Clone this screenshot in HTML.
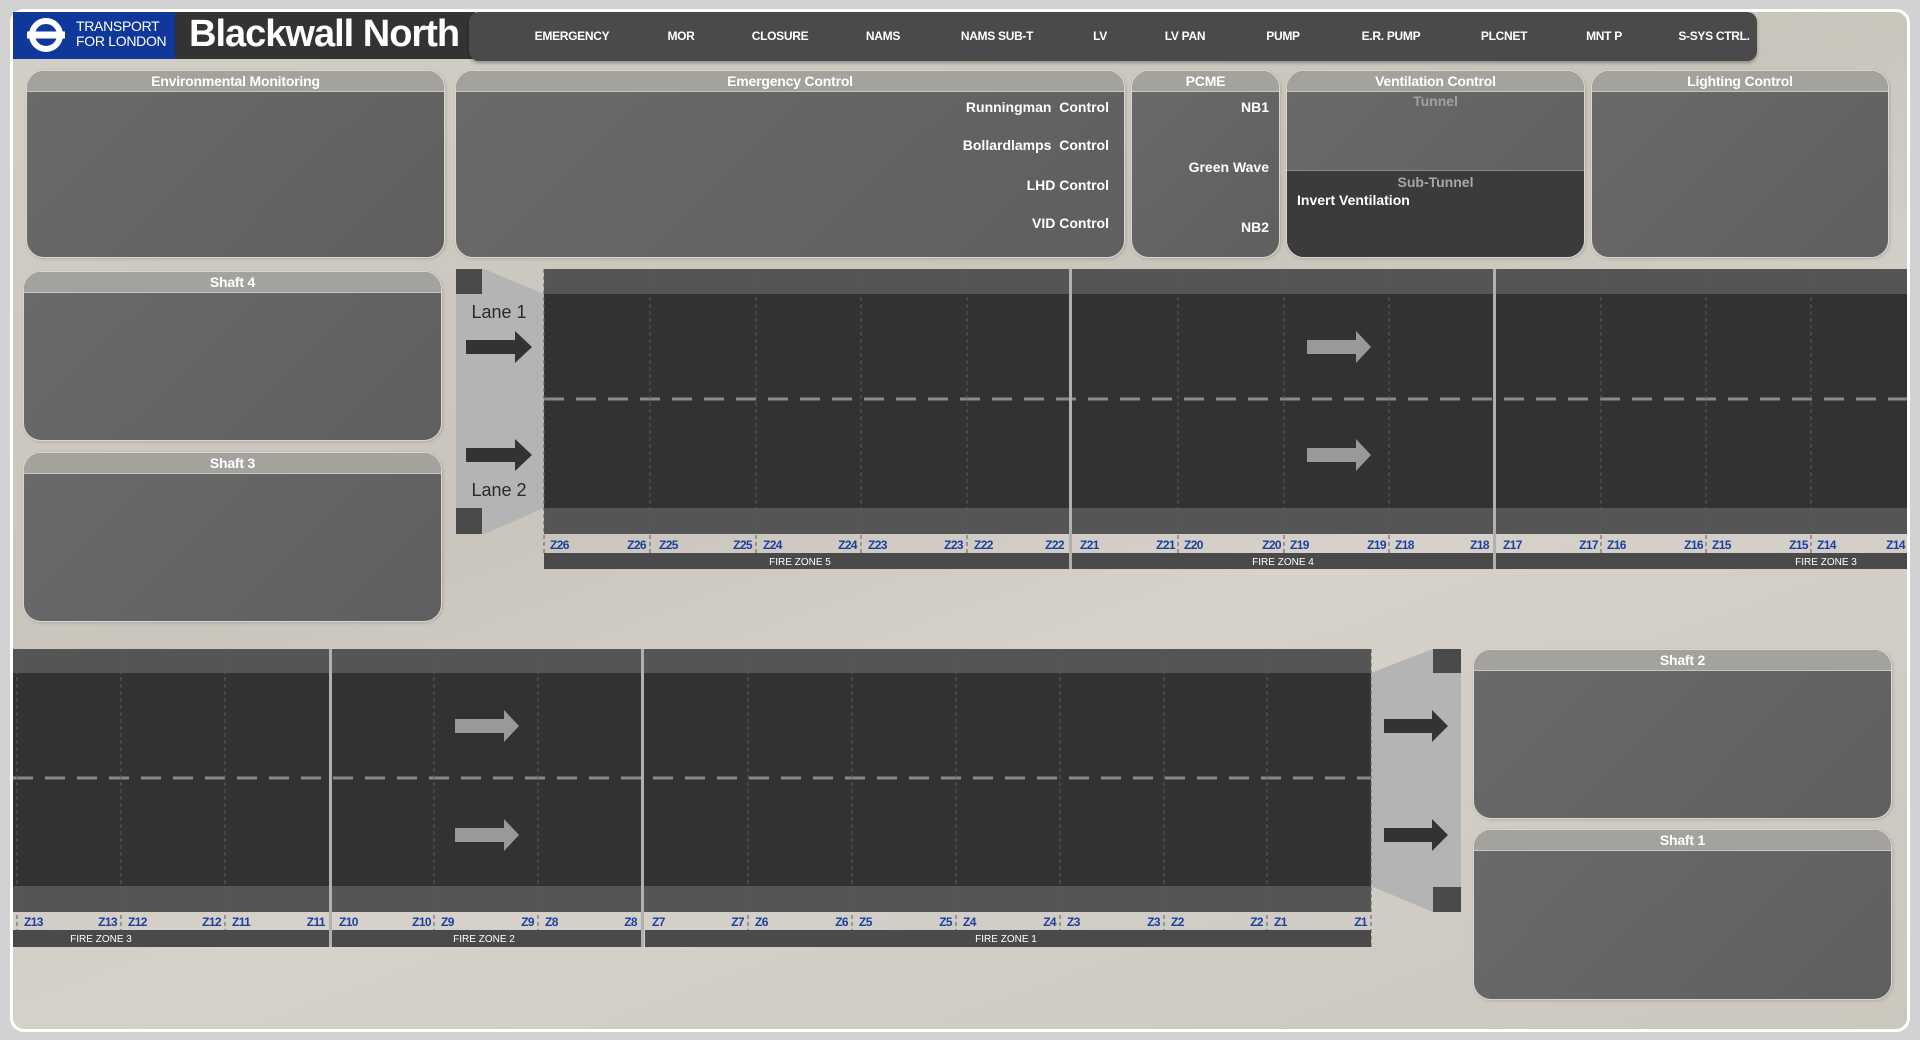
<!DOCTYPE html>
<html><head><meta charset="utf-8"><style>
*{margin:0;padding:0;box-sizing:border-box}
body{width:1920px;height:1040px;overflow:hidden;background:#d2d2d2;font-family:"Liberation Sans",sans-serif;position:relative}
.frame{position:absolute;left:10px;top:9px;width:1900px;height:1023px;border:3px solid #fff;border-radius:14px;background:linear-gradient(160deg,#d3cfc7 0%,#c9c5bc 40%,#d6d2ca 60%,#cbc7be 100%);overflow:hidden}
.abs{position:absolute}
.panel{position:absolute;border:1px solid #d8d6d0;border-radius:18px;background:linear-gradient(135deg,#6a6a6a,#5f5f5f);overflow:hidden;box-shadow:1px 1px 3px rgba(0,0,0,.15)}
.panel .hd{height:21px;background:#a4a29d;border-bottom:1px solid #c8c6c0;color:#fff;font-weight:bold;font-size:14px;text-align:center;line-height:21px;letter-spacing:-.2px}
.t{position:absolute;color:#fff;font-weight:bold;font-size:14px;white-space:nowrap}
.nav{position:absolute;left:469px;top:12px;width:1288px;height:49px;background:#4a4a4a;border-radius:10px;box-shadow:0 2px 3px rgba(0,0,0,.3)}
.nav span{position:absolute;top:17px;color:#fff;font-weight:bold;font-size:12px;letter-spacing:-.3px;transform:translateX(-50%);white-space:nowrap}
</style></head><body>
<div class="frame"></div>
<div class="abs" style="left:13px;top:12px;width:162px;height:47px;background:#10389a"></div>
<svg class="abs" style="left:26px;top:17px" width="40" height="36" viewBox="0 0 40 36"><circle cx="20" cy="18" r="14" fill="none" stroke="#fff" stroke-width="6"/><rect x="1" y="14.5" width="38" height="7" fill="#fff"/></svg>
<div class="abs" style="left:76px;top:19px;color:#fff;font-size:14px;line-height:15px;letter-spacing:-.3px">TRANSPORT<br>FOR LONDON</div>
<div class="abs" style="left:175px;top:12px;width:300px;height:47px;background:#333"></div>
<div class="abs" style="left:189px;top:13px;color:#fff;font-weight:bold;font-size:38px;letter-spacing:-1px">Blackwall North</div>
<div class="nav">
<span style="left:103px">EMERGENCY</span><span style="left:212px">MOR</span><span style="left:311px">CLOSURE</span><span style="left:414px">NAMS</span><span style="left:528px">NAMS SUB-T</span><span style="left:631px">LV</span><span style="left:716px">LV PAN</span><span style="left:814px">PUMP</span><span style="left:922px">E.R. PUMP</span><span style="left:1035px">PLCNET</span><span style="left:1135px">MNT P</span><span style="left:1245px">S-SYS CTRL.</span>
</div>

<div class="panel" style="left:26px;top:70px;width:419px;height:188px"><div class="hd">Environmental Monitoring</div></div>
<div class="panel" style="left:455px;top:70px;width:670px;height:188px"><div class="hd">Emergency Control</div>
<div class="t" style="right:15px;top:28px">Runningman&nbsp; Control</div>
<div class="t" style="right:15px;top:66px">Bollardlamps&nbsp; Control</div>
<div class="t" style="right:15px;top:106px">LHD Control</div>
<div class="t" style="right:15px;top:144px">VID Control</div></div>
<div class="panel" style="left:1131px;top:70px;width:149px;height:188px"><div class="hd">PCME</div>
<div class="t" style="right:10px;top:28px">NB1</div>
<div class="t" style="right:10px;top:88px">Green Wave</div>
<div class="t" style="right:10px;top:148px">NB2</div></div>
<div class="panel" style="left:1286px;top:70px;width:299px;height:188px"><div class="hd">Ventilation Control</div>
<div class="t" style="left:0;right:0;text-align:center;top:22px;color:#a0a0a0">Tunnel</div>
<div class="abs" style="left:0;right:0;top:99px;bottom:0;background:#3b3b3b;border-top:1px solid #888"></div>
<div class="t" style="left:0;right:0;text-align:center;top:103px;color:#a8a8a8">Sub-Tunnel</div>
<div class="t" style="left:10px;top:121px">Invert Ventilation</div></div>
<div class="panel" style="left:1591px;top:70px;width:298px;height:188px"><div class="hd">Lighting Control</div></div>

<div class="panel" style="left:23px;top:271px;width:419px;height:170px"><div class="hd">Shaft 4</div></div>
<div class="panel" style="left:23px;top:452px;width:419px;height:170px"><div class="hd">Shaft 3</div></div>
<div class="panel" style="left:1473px;top:649px;width:419px;height:170px"><div class="hd">Shaft 2</div></div>
<div class="panel" style="left:1473px;top:829px;width:419px;height:171px"><div class="hd">Shaft 1</div></div>

<svg class="abs" style="left:0;top:0" width="1920" height="1040" font-family="Liberation Sans, sans-serif">
<rect x="544" y="269" width="1363" height="25" fill="#555"/>
<rect x="544" y="294" width="1363" height="214" fill="#323232"/>
<rect x="544" y="508" width="1363" height="26" fill="#555"/>
<polygon points="456,269 484,269 544,294 544,508 484,534 456,534" fill="#b4b4b4"/>
<rect x="456" y="269" width="26" height="25" fill="#4a4a4a"/>
<rect x="456" y="508" width="26" height="26" fill="#4a4a4a"/>
<line x1="544" y1="399" x2="1907" y2="399" stroke="#8a8a8a" stroke-width="3" stroke-dasharray="20,12"/>
<g stroke="#5c5c5c" stroke-width="1" stroke-dasharray="4,3">
<line x1="544" y1="269" x2="544" y2="553"/><line x1="650" y1="269" x2="650" y2="553"/><line x1="756" y1="269" x2="756" y2="553"/><line x1="861" y1="269" x2="861" y2="553"/><line x1="967" y1="269" x2="967" y2="553"/>
<line x1="1178" y1="269" x2="1178" y2="553"/><line x1="1284" y1="269" x2="1284" y2="553"/><line x1="1389" y1="269" x2="1389" y2="553"/>
<line x1="1601" y1="269" x2="1601" y2="553"/><line x1="1706" y1="269" x2="1706" y2="553"/><line x1="1811" y1="269" x2="1811" y2="553"/>
</g>
<rect x="544" y="553" width="525" height="16" fill="#4a4a4a"/>
<rect x="1072" y="553" width="421" height="16" fill="#4a4a4a"/>
<rect x="1496" y="553" width="411" height="16" fill="#4a4a4a"/>
<rect x="1069" y="269" width="3" height="300" fill="#b0b0b0"/>
<rect x="1493" y="269" width="3" height="300" fill="#b0b0b0"/>
<g fill="#fff" font-size="10" text-anchor="middle"><text x="800" y="565">FIRE ZONE 5</text><text x="1283" y="565">FIRE ZONE 4</text><text x="1826" y="565">FIRE ZONE 3</text></g>
<g fill="#333"><polygon points="466,340 515,340 515,331 532,347 515,363 515,354 466,354"/><polygon points="466,448 515,448 515,439 532,455 515,471 515,462 466,462"/></g>
<g fill="#999"><polygon points="1307,340 1356,340 1356,331 1371,347 1356,363 1356,354 1307,354"/><polygon points="1307,448 1356,448 1356,439 1371,455 1356,471 1356,462 1307,462"/></g>
<g fill="#2a2a2a" font-size="18" text-anchor="middle"><text x="499" y="318">Lane 1</text><text x="499" y="496">Lane 2</text></g>
<g fill="#1a3fa0" font-size="12" font-weight="bold" letter-spacing="-0.6">
<text x="550" y="549">Z26</text><text x="659" y="549">Z25</text><text x="763" y="549">Z24</text><text x="868" y="549">Z23</text><text x="974" y="549">Z22</text>
<text x="1080" y="549">Z21</text><text x="1184" y="549">Z20</text><text x="1290" y="549">Z19</text><text x="1395" y="549">Z18</text>
<text x="1503" y="549">Z17</text><text x="1607" y="549">Z16</text><text x="1712" y="549">Z15</text><text x="1817" y="549">Z14</text>
</g>
<g fill="#1a3fa0" font-size="12" font-weight="bold" letter-spacing="-0.6" text-anchor="end">
<text x="646" y="549">Z26</text><text x="752" y="549">Z25</text><text x="857" y="549">Z24</text><text x="963" y="549">Z23</text><text x="1064" y="549">Z22</text>
<text x="1175" y="549">Z21</text><text x="1281" y="549">Z20</text><text x="1386" y="549">Z19</text><text x="1489" y="549">Z18</text>
<text x="1598" y="549">Z17</text><text x="1703" y="549">Z16</text><text x="1808" y="549">Z15</text><text x="1905" y="549">Z14</text>
</g>

<rect x="13" y="649" width="1358" height="24" fill="#555"/>
<rect x="13" y="673" width="1358" height="213" fill="#323232"/>
<rect x="13" y="886" width="1358" height="26" fill="#555"/>
<polygon points="1371,673 1433,649 1461,649 1461,912 1433,912 1371,886" fill="#b4b4b4"/>
<rect x="1433" y="649" width="28" height="24" fill="#4a4a4a"/>
<rect x="1433" y="887" width="28" height="25" fill="#4a4a4a"/>
<line x1="13" y1="778" x2="1371" y2="778" stroke="#8a8a8a" stroke-width="3" stroke-dasharray="20,12"/>
<g stroke="#5c5c5c" stroke-width="1" stroke-dasharray="4,3">
<line x1="17" y1="649" x2="17" y2="930"/><line x1="121" y1="649" x2="121" y2="930"/><line x1="225" y1="649" x2="225" y2="930"/>
<line x1="434" y1="649" x2="434" y2="930"/><line x1="538" y1="649" x2="538" y2="930"/>
<line x1="748" y1="649" x2="748" y2="930"/><line x1="852" y1="649" x2="852" y2="930"/><line x1="956" y1="649" x2="956" y2="930"/><line x1="1060" y1="649" x2="1060" y2="930"/><line x1="1164" y1="649" x2="1164" y2="930"/><line x1="1267" y1="649" x2="1267" y2="930"/><line x1="1371" y1="649" x2="1371" y2="947"/>
</g>
<rect x="13" y="930" width="316" height="17" fill="#4a4a4a"/>
<rect x="332" y="930" width="309" height="17" fill="#4a4a4a"/>
<rect x="645" y="930" width="726" height="17" fill="#4a4a4a"/>
<rect x="329" y="649" width="3" height="298" fill="#b0b0b0"/>
<rect x="641" y="649" width="3" height="298" fill="#b0b0b0"/>
<g fill="#fff" font-size="10" text-anchor="middle"><text x="101" y="942">FIRE ZONE 3</text><text x="484" y="942">FIRE ZONE 2</text><text x="1006" y="942">FIRE ZONE 1</text></g>
<g fill="#999"><polygon points="455,719 504,719 504,710 519,726 504,742 504,733 455,733"/><polygon points="455,828 504,828 504,819 519,835 504,851 504,842 455,842"/></g>
<g fill="#333"><polygon points="1384,719 1432,719 1432,710 1448,726 1432,742 1432,733 1384,733"/><polygon points="1384,828 1432,828 1432,819 1448,835 1432,851 1432,842 1384,842"/></g>
<g fill="#1a3fa0" font-size="12" font-weight="bold" letter-spacing="-0.6">
<text x="24" y="926">Z13</text><text x="128" y="926">Z12</text><text x="232" y="926">Z11</text>
<text x="339" y="926">Z10</text><text x="441" y="926">Z9</text><text x="545" y="926">Z8</text>
<text x="652" y="926">Z7</text><text x="755" y="926">Z6</text><text x="859" y="926">Z5</text><text x="963" y="926">Z4</text><text x="1067" y="926">Z3</text><text x="1171" y="926">Z2</text><text x="1274" y="926">Z1</text>
</g>
<g fill="#1a3fa0" font-size="12" font-weight="bold" letter-spacing="-0.6" text-anchor="end">
<text x="117" y="926">Z13</text><text x="221" y="926">Z12</text><text x="325" y="926">Z11</text>
<text x="431" y="926">Z10</text><text x="534" y="926">Z9</text><text x="637" y="926">Z8</text>
<text x="744" y="926">Z7</text><text x="848" y="926">Z6</text><text x="952" y="926">Z5</text><text x="1056" y="926">Z4</text><text x="1160" y="926">Z3</text><text x="1263" y="926">Z2</text><text x="1367" y="926">Z1</text>
</g>
</svg>
</body></html>
